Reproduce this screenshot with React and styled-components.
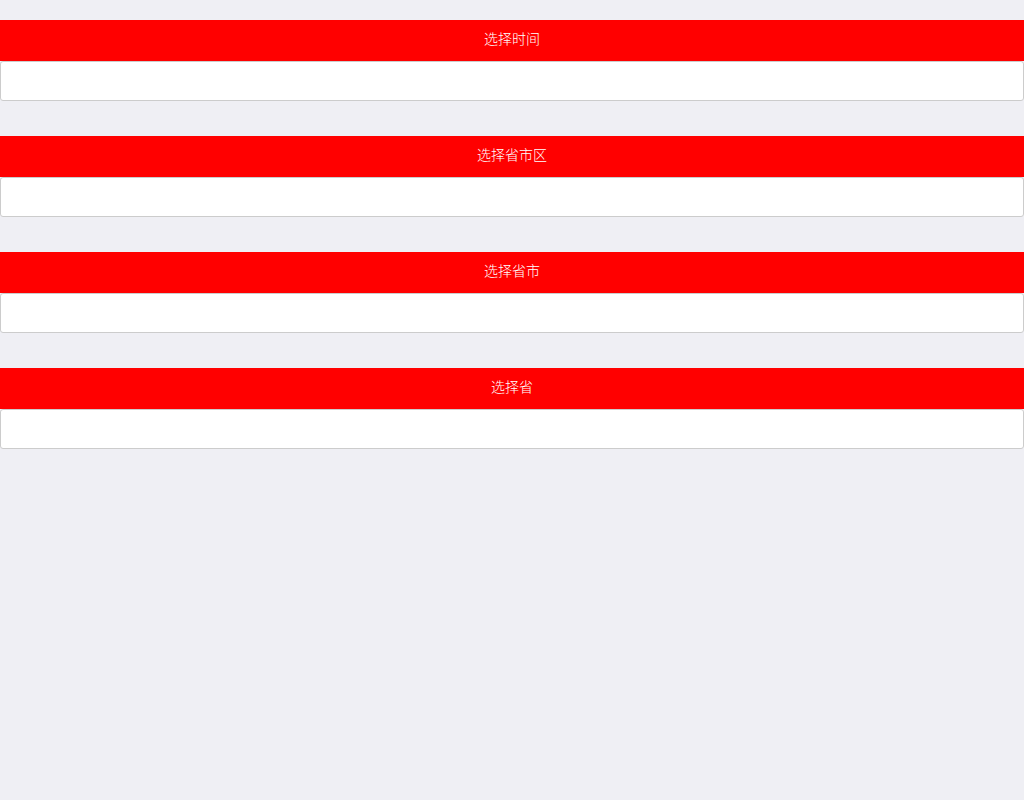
import React from 'react';
import styled, { createGlobalStyle } from 'styled-components';

const GlobalStyle = createGlobalStyle`
  html, body {
    margin: 0;
    padding: 0;
    background: #efeff4;
    font-family: "Helvetica Neue", "Liberation Sans", "Noto Sans CJK SC", sans-serif;
  }
`;

const Page = styled.div`
  display: flex;
  flex-direction: column;
  gap: 35px;
  padding-top: 20px;
  min-height: 800px;
  box-sizing: border-box;
`;

const Section = styled.section`
  display: flex;
  flex-direction: column;
`;

const Header = styled.div`
  height: 41px;
  line-height: 38px;
  background: #ff0000;
  color: #fff;
  font-size: 14px;
  font-weight: 300;
  text-align: center;
`;

const Field = styled.input`
  height: 40px;
  box-sizing: border-box;
  margin: 0;
  padding: 0 10px;
  background: #fff;
  border: 1px solid #cccccc;
  border-radius: 3px;
  font-size: 14px;
  outline: none;
`;

const pickers = ['选择时间', '选择省市区', '选择省市', '选择省'];

export default function App() {
  return (
    <>
      <GlobalStyle />
      <Page>
        {pickers.map(title => (
          <Section key={title}>
            <Header>{title}</Header>
            <Field type="text" readOnly />
          </Section>
        ))}
      </Page>
    </>
  );
}
